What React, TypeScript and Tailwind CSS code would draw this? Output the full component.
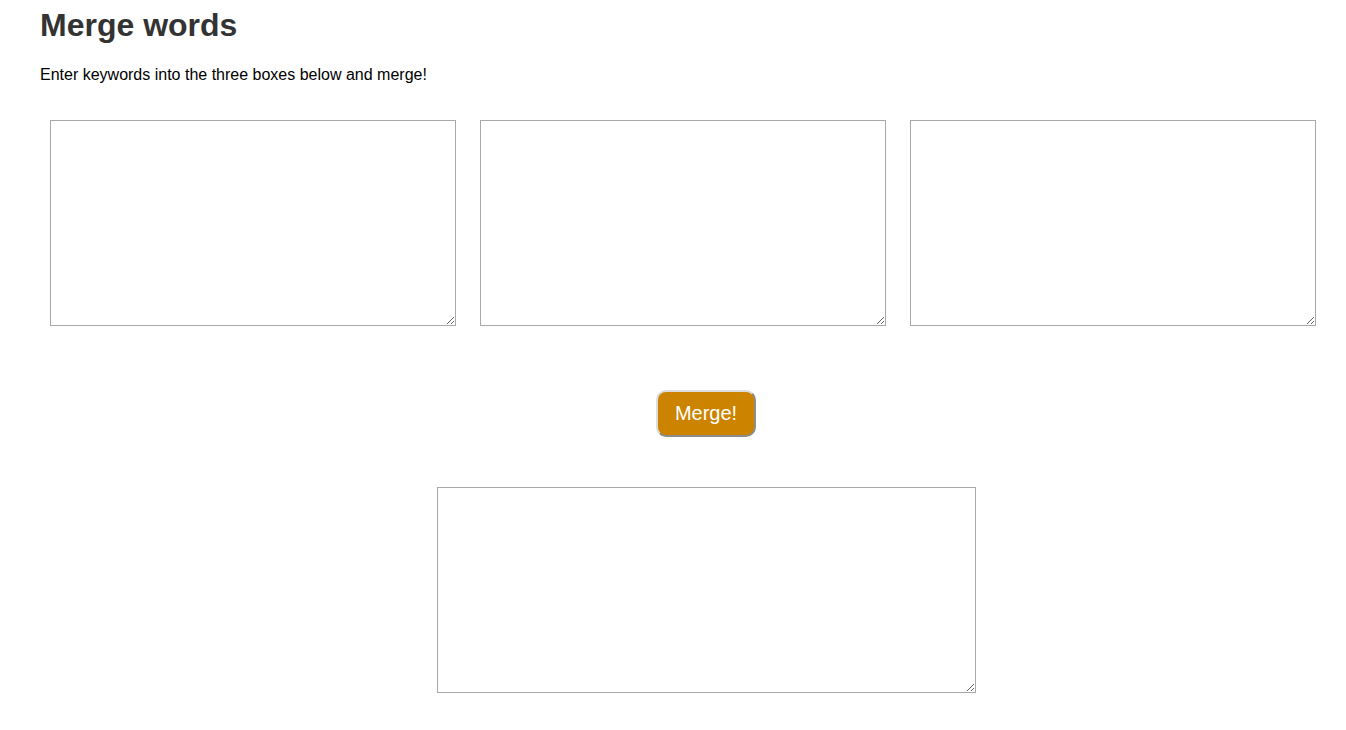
import { useState } from "react";

const boxClass =
  "block h-[206px] w-full resize rounded-none border border-[#a9a9a9] bg-white p-0.5 text-sm text-black";

export default function App() {
  const [lists, setLists] = useState(["", "", ""]);
  const [result, setResult] = useState("");

  const update = (index: number, value: string) =>
    setLists(lists.map((list, i) => (i === index ? value : list)));

  const merge = () => {
    const groups = lists
      .map((list) => list.split("\n").map((word) => word.trim()).filter(Boolean))
      .filter((group) => group.length > 0);
    if (groups.length === 0) {
      setResult("");
      return;
    }
    const merged = groups.reduce((left, right) =>
      left.flatMap((a) => right.map((b) => `${a} ${b}`)),
    );
    setResult(merged.join("\n"));
  };

  return (
    <main className="min-h-screen bg-white pt-1 pb-9 pl-10 font-['Liberation_Sans',Arial,sans-serif] text-black">
      <h1 className="text-[32px] leading-[42px] font-bold text-[#333333]">Merge words</h1>
      <p className="mt-4 text-base leading-[26px]">
        Enter keywords into the three boxes below and merge!
      </p>
      <div className="mt-8 grid grid-cols-3 gap-6 pr-[30px] pl-[10px]">
        {lists.map((list, index) => (
          <textarea
            key={index}
            aria-label={`Keywords ${index + 1}`}
            className={boxClass}
            value={list}
            onChange={(event) => update(index, event.target.value)}
          />
        ))}
      </div>
      <div className="mt-16 flex flex-col items-center pl-[26px]">
        <button
          type="button"
          onClick={merge}
          className="h-[47px] w-[100px] rounded-[10px] border-2 border-t-[#dcdcdc] border-r-[#8c8c8c] border-b-[#8c8c8c] border-l-[#dcdcdc] bg-[#cc8400] pb-0.5 text-xl text-white"
        >
          Merge!
        </button>
        <div className="mt-[50px] w-[539px] max-w-full">
          <textarea
            aria-label="Merged keywords"
            className={boxClass}
            value={result}
            onChange={(event) => setResult(event.target.value)}
          />
        </div>
      </div>
    </main>
  );
}
